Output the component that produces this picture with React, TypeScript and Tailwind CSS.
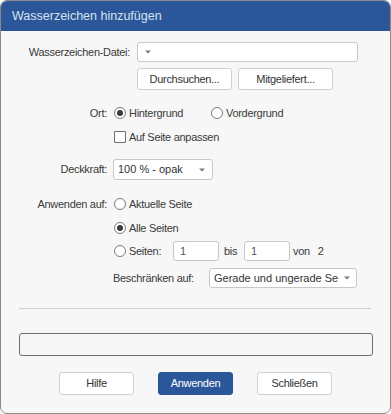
import React from "react";

function Arrow() {
  return (
    <svg width="6" height="4" viewBox="0 0 6 4" className="shrink-0">
      <path d="M0 0.5h6L3 3.5z" fill="#7a7a7a" />
    </svg>
  );
}

function Radio({ checked = false }: { checked?: boolean }) {
  return (
    <span className="flex h-[12px] w-[12px] shrink-0 items-center justify-center rounded-full border border-[#7a7a7a] bg-white">
      {checked && <span className="h-[6px] w-[6px] rounded-full bg-[#3a3a3a]" />}
    </span>
  );
}

function Button({ label, primary = false }: { label: string; primary?: boolean }) {
  return (
    <div
      className={
        primary
          ? "flex h-[23px] w-[75px] items-center justify-center rounded-[3px] border border-[#2b579a] bg-[#2b579a] text-white"
          : "flex h-[23px] w-[75px] items-center justify-center rounded-[3px] border border-[#d2d2d2] bg-white text-[#333]"
      }
    >
      {label}
    </div>
  );
}

export default function App() {
  return (
    <div className="h-[414px] w-[391px] font-['Liberation_Sans',Arial,sans-serif] text-[11px] tracking-[-0.3px] text-[#3a3a3a]">
      <div className="flex h-[414px] w-[391px] flex-col overflow-hidden rounded-[7px] border border-[#8a8a8a] bg-[#f7f7f7]">
        {/* title bar */}
        <div className="flex h-[30px] shrink-0 items-center bg-[#2b579a] pl-[11px] text-[12.5px] tracking-[0px] text-[#d8e2ef]">
          Wasserzeichen hinzufügen
        </div>

        {/* file row */}
        <div className="mt-[11px] flex h-[20px] items-center">
          <div className="w-[129px] text-right">Wasserzeichen-Datei:</div>
          <div className="ml-[7px] flex h-[20px] w-[221px] items-center rounded-[3px] border border-[#c8c8c8] bg-white pl-[7px]">
            <Arrow />
          </div>
        </div>
        <div className="ml-[136px] mt-[6px] flex gap-[6px]">
          <div className="flex h-[22px] w-[95px] items-center justify-center rounded-[3px] border border-[#d0d0d0] bg-white text-[#333]">
            Durchsuchen...
          </div>
          <div className="flex h-[22px] w-[95px] items-center justify-center rounded-[3px] border border-[#d0d0d0] bg-white text-[#333]">
            Mitgeliefert...
          </div>
        </div>

        {/* Ort */}
        <div className="mt-[15px] flex h-[16px] items-center">
          <div className="w-[106px] text-right">Ort:</div>
          <div className="ml-[7px] flex w-[97px] items-center gap-[3px]">
            <Radio checked />
            <span>Hintergrund</span>
          </div>
          <div className="flex items-center gap-[3px]">
            <Radio />
            <span>Vordergrund</span>
          </div>
        </div>
        <div className="ml-[113px] mt-[8px] flex h-[16px] items-center gap-[3px]">
          <span className="h-[12px] w-[12px] rounded-[1px] border border-[#6e6e6e] bg-white" />
          <span>Auf Seite anpassen</span>
        </div>

        {/* Deckkraft */}
        <div className="mt-[14px] flex h-[21px] items-center">
          <div className="w-[106px] text-right">Deckkraft:</div>
          <div className="ml-[6px] flex h-[21px] w-[100px] items-center justify-between rounded-[3px] border border-[#c8c8c8] bg-white pl-[4px] pr-[7px] tracking-[0px] text-[#333]">
            <span>100 % - opak</span>
            <Arrow />
          </div>
        </div>

        {/* Anwenden auf */}
        <div className="mt-[16px] flex h-[16px] items-center">
          <div className="w-[106px] text-right">Anwenden auf:</div>
          <div className="ml-[7px] flex items-center gap-[3px]">
            <Radio />
            <span>Aktuelle Seite</span>
          </div>
        </div>
        <div className="ml-[113px] mt-[8px] flex h-[16px] items-center gap-[3px]">
          <Radio checked />
          <span>Alle Seiten</span>
        </div>
        <div className="ml-[113px] mt-[5px] flex h-[20px] items-center">
          <div className="flex w-[59px] items-center gap-[3px]">
            <Radio />
            <span>Seiten:</span>
          </div>
          <div className="flex h-[20px] w-[46px] items-center rounded-[3px] border border-[#c8c8c8] bg-white pl-[6px] text-[#555]">
            1
          </div>
          <span className="ml-[5px] w-[20px]">bis</span>
          <div className="flex h-[20px] w-[46px] items-center rounded-[3px] border border-[#c8c8c8] bg-white pl-[6px] text-[#555]">
            1
          </div>
          <span className="ml-[3px]">von</span>
          <span className="ml-[8px]">2</span>
        </div>
        <div className="ml-[112px] mt-[7px] flex h-[20px] items-center">
          <span className="w-[96px]">Beschränken auf:</span>
          <div className="flex h-[20px] w-[148px] items-center rounded-[3px] border border-[#c8c8c8] bg-white pl-[4px] pr-[6px] tracking-[0px] text-[#333]">
            <span className="w-[124px] overflow-hidden whitespace-nowrap">Gerade und ungerade Seiten</span>
            <span className="ml-auto">
              <Arrow />
            </span>
          </div>
        </div>

        {/* divider */}
        <div className="ml-[18px] mt-[20px] h-[1px] w-[352px] bg-[#cfcfcf]" />

        {/* progress */}
        <div className="ml-[18px] mt-[24px] h-[23px] w-[354px] rounded-[3px] border border-[#707070] bg-[#f7f7f7]" />

        {/* buttons */}
        <div className="ml-[58px] mt-[16px] flex gap-[24px]">
          <Button label="Hilfe" />
          <Button label="Anwenden" primary />
          <Button label="Schließen" />
        </div>
      </div>
    </div>
  );
}
